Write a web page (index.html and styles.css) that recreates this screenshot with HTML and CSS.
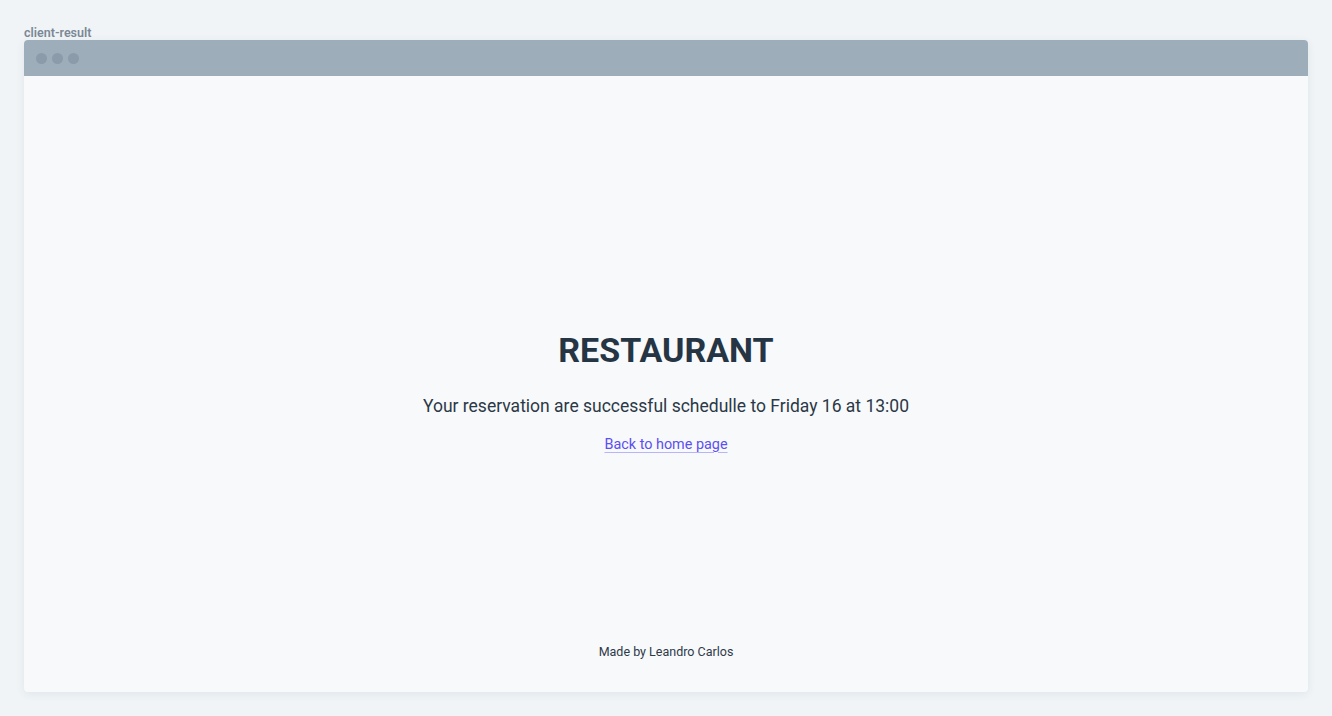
FILE: index.html
```html
<!DOCTYPE html>
<html>
<head>
<meta charset="utf-8">
<link rel="stylesheet" href="styles.css">
</head>
<body>
<div class="page">
  <div class="label">client-result</div>
  <div class="window">
    <div class="titlebar">
      <span class="dot"></span><span class="dot"></span><span class="dot"></span>
    </div>
    <div class="content">
      <main class="main">
        <h1 class="title">RESTAURANT</h1>
        <p class="message">Your reservation are successful schedulle to Friday 16 at 13:00</p>
        <a class="link" href="#">Back to home page</a>
      </main>
      <footer class="footer">Made by Leandro Carlos</footer>
    </div>
  </div>
</div>
</body>
</html>
```
FILE: styles.css
```css
html, body {
  margin: 0;
  padding: 0;
  background: #f0f4f7;
  font-family: "Roboto", "Liberation Sans", sans-serif;
}
.page {
  padding: 24px 24px 24px 24px;
  height: 716px;
  box-sizing: border-box;
  display: flex;
  flex-direction: column;
}
.label {
  font-size: 12.5px;
  font-weight: 600;
  color: #7b8896;
  line-height: 16px;
  height: 16px;
  margin-top: 1px;
  margin-bottom: -1px;
}
.window {
  height: 652px;
  display: flex;
  flex-direction: column;
  border-radius: 4px;
  background: #f8f9fb;
  box-shadow: 0 2px 8px rgba(40, 60, 80, 0.08);
  overflow: hidden;
}
.titlebar {
  height: 36px;
  background: #9eadba;
  display: flex;
  align-items: center;
  gap: 5px;
  padding-left: 12px;
  flex-shrink: 0;
}
.dot {
  width: 11px;
  height: 11px;
  border-radius: 50%;
  background: #8b9baa;
}
.content {
  flex: 1;
  display: flex;
  flex-direction: column;
  align-items: center;
}
.main {
  flex: 1;
  display: flex;
  flex-direction: column;
  align-items: center;
  justify-content: center;
  padding-top: 62px;
}
.title {
  margin: 0;
  font-size: 34px;
  font-weight: 700;
  color: #263544;
  line-height: 44px;
}
.message {
  margin: 22px 0 0 0;
  font-size: 17.5px;
  color: #2b3846;
  line-height: 24px;
}
.link {
  margin-top: 17px;
  font-size: 14.4px;
  color: #5b50f0;
  text-decoration: underline;
  text-decoration-color: #b8b4fb;
  text-underline-offset: 3px;
  line-height: 20px;
}
.footer {
  font-size: 12.5px;
  color: #2d3a48;
  padding-bottom: 32px;
  line-height: 16px;
}
```
